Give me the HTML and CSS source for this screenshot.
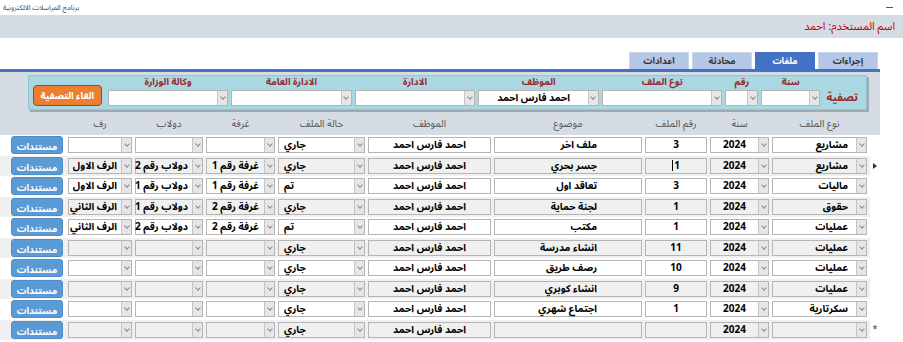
FILE: index.html
```html
<!DOCTYPE html>
<html lang="ar">
<head>
<meta charset="utf-8">
<title>برنامج المراسلات الالكترونية</title>
<link rel="stylesheet" href="styles.css">
</head>
<body>
<div class="titlebar">
  <span class="title">برنامج المراسلات الالكترونية</span>
  <span class="minimize"></span>
</div>
<div class="userbar" dir="rtl"><span class="user">اسم المستخدم: احمد</span></div>
<div class="tabs" dir="rtl">
  <div class="tab">إجراءات</div>
  <div class="tab active">ملفات</div>
  <div class="tab">محادثة</div>
  <div class="tab">اعدادات</div>
</div>
<div class="content" dir="rtl">
  <div class="filter">
    <div class="filter-title">تصفية</div>
    <div class="fgroup f-year"><div class="flabel">سنة</div><div class="combo"><span class="arr"></span><span class="val"></span></div></div>
    <div class="fgroup f-num"><div class="flabel">رقم</div><div class="combo"><span class="arr"></span><span class="val"></span></div></div>
    <div class="fgroup f-wide"><div class="flabel">نوع الملف</div><div class="combo"><span class="arr"></span><span class="val"></span></div></div>
    <div class="fgroup f-wide"><div class="flabel">الموظف</div><div class="combo"><span class="arr"></span><span class="val center">احمد فارس احمد</span></div></div>
    <div class="fgroup f-wide"><div class="flabel">الادارة</div><div class="combo"><span class="arr"></span><span class="val"></span></div></div>
    <div class="fgroup f-wide"><div class="flabel">الادارة العامة</div><div class="combo"><span class="arr"></span><span class="val"></span></div></div>
    <div class="fgroup f-wide"><div class="flabel">وكالة الوزارة</div><div class="combo"><span class="arr"></span><span class="val"></span></div></div>
    <button class="clear">الغاء التصفية</button>
  </div>

  <div class="ghead">
    <div></div>
    <div>نوع الملف</div>
    <div>سنة</div>
    <div>رقم الملف</div>
    <div>موضوع</div>
    <div>الموظف</div>
    <div>حالة الملف</div>
    <div>غرفة</div>
    <div>دولاب</div>
    <div>رف</div>
    <div></div>
  </div>

  <div class="rows">
    <div class="row">
      <div class="ind"></div>
      <div class="combo"><span class="arr"></span><span class="val right">مشاريع</span></div>
      <div class="combo"><span class="arr"></span><span class="val center">2024</span></div>
      <div class="box center">3</div>
      <div class="box subj">ملف اخر</div>
      <div class="box center">احمد فارس احمد</div>
      <div class="combo"><span class="arr"></span><span class="val left">جاري</span></div>
      <div class="combo"><span class="arr"></span><span class="val left"></span></div>
      <div class="combo"><span class="arr"></span><span class="val left"></span></div>
      <div class="combo"><span class="arr"></span><span class="val left"></span></div>
      <div class="bcell"><button class="docs">مستندات</button></div>
    </div>
    <div class="row alt">
      <div class="ind"><span class="tri"></span></div>
      <div class="combo"><span class="arr"></span><span class="val right">مشاريع</span></div>
      <div class="combo"><span class="arr"></span><span class="val center">2024</span></div>
      <div class="box center">1<span class="caret"></span></div>
      <div class="box subj">جسر بحري</div>
      <div class="box center">احمد فارس احمد</div>
      <div class="combo"><span class="arr"></span><span class="val left">جاري</span></div>
      <div class="combo"><span class="arr"></span><span class="val left">غرفة رقم 1</span></div>
      <div class="combo"><span class="arr"></span><span class="val left">دولاب رقم 2</span></div>
      <div class="combo"><span class="arr"></span><span class="val left">الرف الاول</span></div>
      <div class="bcell"><button class="docs">مستندات</button></div>
    </div>
    <div class="row">
      <div class="ind"></div>
      <div class="combo"><span class="arr"></span><span class="val right">ماليات</span></div>
      <div class="combo"><span class="arr"></span><span class="val center">2024</span></div>
      <div class="box center">3</div>
      <div class="box subj">تعاقد اول</div>
      <div class="box center">احمد فارس احمد</div>
      <div class="combo"><span class="arr"></span><span class="val left">تم</span></div>
      <div class="combo"><span class="arr"></span><span class="val left">غرفة رقم 1</span></div>
      <div class="combo"><span class="arr"></span><span class="val left">دولاب رقم 1</span></div>
      <div class="combo"><span class="arr"></span><span class="val left">الرف الاول</span></div>
      <div class="bcell"><button class="docs">مستندات</button></div>
    </div>
    <div class="row alt">
      <div class="ind"></div>
      <div class="combo"><span class="arr"></span><span class="val right">حقوق</span></div>
      <div class="combo"><span class="arr"></span><span class="val center">2024</span></div>
      <div class="box center">1</div>
      <div class="box subj">لجنة حماية</div>
      <div class="box center">احمد فارس احمد</div>
      <div class="combo"><span class="arr"></span><span class="val left">جاري</span></div>
      <div class="combo"><span class="arr"></span><span class="val left">غرفة رقم 2</span></div>
      <div class="combo"><span class="arr"></span><span class="val left">دولاب رقم 1</span></div>
      <div class="combo"><span class="arr"></span><span class="val left">الرف الثاني</span></div>
      <div class="bcell"><button class="docs">مستندات</button></div>
    </div>
    <div class="row">
      <div class="ind"></div>
      <div class="combo"><span class="arr"></span><span class="val right">عمليات</span></div>
      <div class="combo"><span class="arr"></span><span class="val center">2024</span></div>
      <div class="box center">1</div>
      <div class="box subj">مكتب</div>
      <div class="box center">احمد فارس احمد</div>
      <div class="combo"><span class="arr"></span><span class="val left">تم</span></div>
      <div class="combo"><span class="arr"></span><span class="val left">غرفة رقم 2</span></div>
      <div class="combo"><span class="arr"></span><span class="val left">دولاب رقم 2</span></div>
      <div class="combo"><span class="arr"></span><span class="val left">الرف الثاني</span></div>
      <div class="bcell"><button class="docs">مستندات</button></div>
    </div>
    <div class="row alt">
      <div class="ind"></div>
      <div class="combo"><span class="arr"></span><span class="val right">عمليات</span></div>
      <div class="combo"><span class="arr"></span><span class="val center">2024</span></div>
      <div class="box center">11</div>
      <div class="box subj">انشاء مدرسة</div>
      <div class="box center">احمد فارس احمد</div>
      <div class="combo"><span class="arr"></span><span class="val left">جاري</span></div>
      <div class="combo"><span class="arr"></span><span class="val left"></span></div>
      <div class="combo"><span class="arr"></span><span class="val left"></span></div>
      <div class="combo"><span class="arr"></span><span class="val left"></span></div>
      <div class="bcell"><button class="docs">مستندات</button></div>
    </div>
    <div class="row">
      <div class="ind"></div>
      <div class="combo"><span class="arr"></span><span class="val right">عمليات</span></div>
      <div class="combo"><span class="arr"></span><span class="val center">2024</span></div>
      <div class="box center">10</div>
      <div class="box subj">رصف طريق</div>
      <div class="box center">احمد فارس احمد</div>
      <div class="combo"><span class="arr"></span><span class="val left">جاري</span></div>
      <div class="combo"><span class="arr"></span><span class="val left"></span></div>
      <div class="combo"><span class="arr"></span><span class="val left"></span></div>
      <div class="combo"><span class="arr"></span><span class="val left"></span></div>
      <div class="bcell"><button class="docs">مستندات</button></div>
    </div>
    <div class="row alt">
      <div class="ind"></div>
      <div class="combo"><span class="arr"></span><span class="val right">عمليات</span></div>
      <div class="combo"><span class="arr"></span><span class="val center">2024</span></div>
      <div class="box center">9</div>
      <div class="box subj">انشاء كوبري</div>
      <div class="box center">احمد فارس احمد</div>
      <div class="combo"><span class="arr"></span><span class="val left">جاري</span></div>
      <div class="combo"><span class="arr"></span><span class="val left"></span></div>
      <div class="combo"><span class="arr"></span><span class="val left"></span></div>
      <div class="combo"><span class="arr"></span><span class="val left"></span></div>
      <div class="bcell"><button class="docs">مستندات</button></div>
    </div>
    <div class="row">
      <div class="ind"></div>
      <div class="combo"><span class="arr"></span><span class="val right">سكرتارية</span></div>
      <div class="combo"><span class="arr"></span><span class="val center">2024</span></div>
      <div class="box center">1</div>
      <div class="box subj">اجتماع شهري</div>
      <div class="box center">احمد فارس احمد</div>
      <div class="combo"><span class="arr"></span><span class="val left">جاري</span></div>
      <div class="combo"><span class="arr"></span><span class="val left"></span></div>
      <div class="combo"><span class="arr"></span><span class="val left"></span></div>
      <div class="combo"><span class="arr"></span><span class="val left"></span></div>
      <div class="bcell"><button class="docs">مستندات</button></div>
    </div>
    <div class="row alt">
      <div class="ind"><span class="star">*</span></div>
      <div class="combo"><span class="arr"></span><span class="val right"></span></div>
      <div class="combo"><span class="arr"></span><span class="val center">2024</span></div>
      <div class="box center"></div>
      <div class="box subj"></div>
      <div class="box center">احمد فارس احمد</div>
      <div class="combo"><span class="arr"></span><span class="val left">جاري</span></div>
      <div class="combo"><span class="arr"></span><span class="val left"></span></div>
      <div class="combo"><span class="arr"></span><span class="val left"></span></div>
      <div class="combo"><span class="arr"></span><span class="val left"></span></div>
      <div class="bcell"><button class="docs">مستندات</button></div>
    </div>
  </div>
</div>
</body>
</html>
```

FILE: styles.css
```css
* { box-sizing: border-box; }
html, body { margin: 0; padding: 0; background: #fff; }
body {
  width: 903px;
  height: 342px;
  overflow: hidden;
  font-family: "Noto Sans Arabic", "DejaVu Sans", sans-serif;
  color: #000;
}

/* title bar */
.titlebar {
  height: 15px;
  display: flex;
  align-items: center;
  justify-content: space-between;
  padding: 0 10px 0 3px;
}
.title { font-size: 7px; color: #444; line-height: 1; }
.minimize { width: 7px; height: 1px; background: #555; }

/* user bar */
.userbar {
  height: 23px;
  background: #d6dce4;
  display: flex;
  align-items: center;
  padding-right: 8px;
}
.user { font-size: 11px; color: #c00000; line-height: 1; }

/* tabs */
.tabs {
  width: 880px;
  margin-top: 14px;
  height: 20px;
  display: flex;
  align-items: flex-end;
  gap: 3px;
  padding-right: 2px;
  border-bottom: 3px solid #4472c4;
}
.tab {
  width: 60px;
  height: 17px;
  background: #b4c7e7;
  border: 1px solid #cbd7ec;
  border-bottom: none;
  font-size: 9px;
  font-weight: bold;
  color: #333;
  display: flex;
  align-items: center;
  justify-content: center;
}
.tab.active { background: #4472c4; border-color: #4472c4; color: #fff; }

/* content */
.content {
  width: 880px;
  height: 270px;
  background: #d6dce4;
  padding-top: 3px;
}

/* filter panel */
.filter {
  margin: 0 13px 0 28px;
  height: 35px;
  background: #a9d8e3;
  border: 1px solid #93c6d3;
  box-shadow: 2px 2px 0 #a2a8b0;
  display: flex;
  align-items: flex-end;
  gap: 3px;
  padding: 0 8px 3px 4px;
}
.filter-title {
  width: 32px;
  margin-left: 3px;
  height: 16px;
  line-height: 16px;
  font-size: 11px;
  font-weight: bold;
  color: #a0282c;
}
.fgroup { display: flex; flex-direction: column; align-items: center; }
.f-year { width: 59px; }
.f-num { width: 33px; }
.f-wide { width: 121px; }
.flabel {
  font-size: 9.5px;
  font-weight: bold;
  color: #a0282c;
  line-height: 11px;
  height: 11px;
  margin-bottom: 2px;
  white-space: nowrap;
}
.fgroup .combo { width: 100%; height: 16px; background: #fff; }
.clear {
  width: 69px;
  height: 21px;
  margin: 0 3px 0 0;
  padding: 0;
  background: #ed7d31;
  border: 1.5px solid #9a4d17;
  border-radius: 4px;
  color: #fff;
  font-family: inherit;
  font-size: 9.5px;
  font-weight: bold;
}

/* combo box */
.combo {
  display: flex;
  height: 16px;
  border: 1px solid #b5b5b5;
  background: #fff;
}
.arr {
  width: 10px;
  flex: none;
  background: #e6e6e6;
  border-left: 1px solid #c4c4c4;
  display: flex;
  align-items: center;
  justify-content: center;
}
.arr::after {
  content: "";
  width: 3px;
  height: 3px;
  border-right: 1px solid #8a8a8a;
  border-bottom: 1px solid #8a8a8a;
  transform: translateY(-1px) rotate(45deg);
}
.val {
  flex: 1;
  min-width: 0;
  font-size: 10px;
  font-weight: bold;
  line-height: 14px;
  white-space: nowrap;
  overflow: visible;
  padding: 0 4px;
}
.val.right { text-align: right; padding-right: 8px; }
.val.left { text-align: left; padding-left: 5px; }
.val.center { text-align: center; }

/* grid */
.ghead, .row {
  display: grid;
  grid-template-columns: 10px 95px 59px 62px 148px 123px 87px 69px 68px 64px 54px;
  column-gap: 3px;
  align-items: center;
}
.ghead {
  height: 23px;
  margin-top: 2px;
  font-size: 10px;
  color: #555;
  text-align: center;
  white-space: nowrap;
}
.rows { background: #fff; height: 207px; }
.row { height: 20.5px; background: #fff; }
.row.alt { background: #f0f0f0; }
.row.alt .combo, .row.alt .box { background: #f0f0f0; }
.row .combo, .row .box { height: 16px; }
.box {
  border: 1px solid #b5b5b5;
  background: #fff;
  font-size: 10px;
  font-weight: bold;
  line-height: 14px;
  white-space: nowrap;
  overflow: visible;
}
.box.center { text-align: center; }
.box.subj { text-align: right; padding-right: 44px; }
.caret {
  display: inline-block;
  width: 1px;
  height: 11px;
  background: #000;
  vertical-align: -2px;
  margin-right: 1px;
}
.ind {
  height: 20.5px;
  background: #fff;
  display: flex;
  align-items: center;
  justify-content: center;
}
.tri {
  width: 0;
  height: 0;
  border-top: 3px solid transparent;
  border-bottom: 3px solid transparent;
  border-left: 4px solid #333;
}
.star { font-size: 9px; color: #333; line-height: 1; }
.bcell { display: flex; justify-content: flex-end; }
.docs {
  width: 52px;
  height: 18px;
  padding: 0;
  background: #5b9bd5;
  border: 1px solid #4f8ccb;
  border-radius: 3px;
  color: #fff;
  font-family: inherit;
  font-size: 9.5px;
  font-weight: bold;
}
```
